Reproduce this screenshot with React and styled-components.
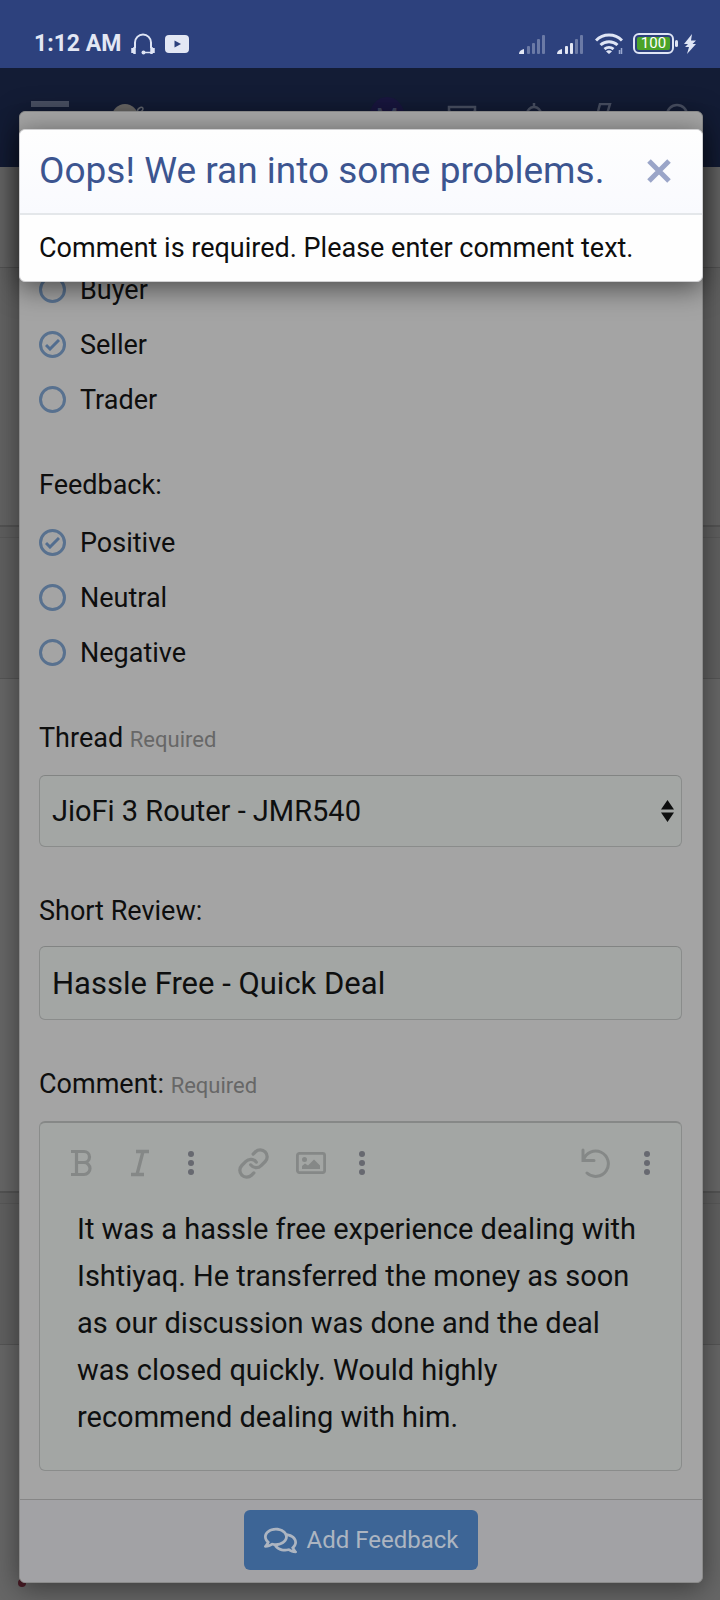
import React, { useState } from 'react';
import styled, { createGlobalStyle } from 'styled-components';
import { Link as LinkIcon } from 'lucide-react';
import { FaRegComments } from 'react-icons/fa';

const App = () => {
  const [role, setRole] = useState('Seller');
  const [rating, setRating] = useState('Positive');
  const [review, setReview] = useState('Hassle Free - Quick Deal');
  const [comment, setComment] = useState(
    'It was a hassle free experience dealing with Ishtiyaq. He transferred the money as soon as our discussion was done and the deal was closed quickly. Would highly recommend dealing with him.'
  );

  return (
    <Screen>
      <GlobalStyle />
      <Backdrop>
        <StatusBar />
        <NavBar />
        <PageBlock $height={100} />
        <PageBlock $height={258} $shade="#636363" $line />
        <Divider />
        <PageBlock $height={140} $shade="#606060" />
        <PageBlock $height={513} $line />
        <Divider />
        <PageBlock $height={140} $shade="#606060" />
        <PageBlock $height={256} $line $grow>
          <RedDot />
        </PageBlock>
      </Backdrop>

      <Panel>
        <PanelBody>
          <RadioGroup name="role" options={['Buyer', 'Seller', 'Trader']} value={role} onChange={setRole} />
          <RadioGroup
            name="rating"
            legend="Feedback:"
            options={['Positive', 'Neutral', 'Negative']}
            value={rating}
            onChange={setRating}
          />
          <Field>
            <Label htmlFor="thread">Thread <Hint>Required</Hint></Label>
            <SelectBox>
              <Select id="thread" defaultValue="jiofi">
                <option value="jiofi">JioFi 3 Router - JMR540</option>
              </Select>
              <svg width="13" height="22" viewBox="0 0 13 22" fill="#0e0f0f">
                <path d="M6.500 0L13 9.500H0zM6.500 22l6.500-9.500H0z" />
              </svg>
            </SelectBox>
          </Field>
          <Field>
            <Label htmlFor="review">Short Review:</Label>
            <Input id="review" value={review} onChange={e => setReview(e.target.value)} />
          </Field>
          <Field $last>
            <Label htmlFor="comment">Comment: <Hint>Required</Hint></Label>
            <Editor>
              <Toolbar />
              <Textarea id="comment" rows={5} value={comment} onChange={e => setComment(e.target.value)} />
            </Editor>
          </Field>
        </PanelBody>
        <PanelFooter>
          <SubmitButton type="button">
            <FaRegComments size={33} />
            Add Feedback
          </SubmitButton>
        </PanelFooter>
      </Panel>

      <Alert role="alertdialog" aria-labelledby="alert-title">
        <AlertHeader>
          <AlertTitle id="alert-title">Oops! We ran into some problems.</AlertTitle>
          <IconButton type="button" aria-label="Close">
            <svg width="24" height="24" viewBox="0 0 24 24" stroke="#9aa5c8" strokeWidth="5">
              <path d="M2 2l20 20M22 2L2 22" />
            </svg>
          </IconButton>
        </AlertHeader>
        <AlertText>Comment is required. Please enter comment text.</AlertText>
      </Alert>
    </Screen>
  );
};

const StatusBar = () => (
  <StatusRow>
    <Clock>1:12 AM</Clock>
    <svg width="24" height="22" viewBox="0 0 24 22" fill="none" stroke="#dfe5f5" strokeWidth="2">
      <path d="M4 15V9.500a8 8 0 0 1 16 0V15" />
      <path d="M12 19.500h8" strokeWidth="1.500" />
      <circle cx="12.500" cy="19.500" r="2" fill="#dfe5f5" stroke="none" />
      <path d="M1.500 15v5M3.500 14v7M22.500 15v5M20.500 14v7" strokeWidth="2.500" />
    </svg>
    <svg width="24" height="18" viewBox="0 0 24 18">
      <rect width="24" height="18" rx="4" fill="#e3e7f4" />
      <path d="M9.500 5.500v7l6.500-3.500z" fill="#2d417d" />
    </svg>
    <Spacer />
    <Signal bars={1} />
    <Signal bars={3} />
    <svg width="28" height="22" viewBox="0 0 28 22" fill="none" stroke="#dfe5f5" strokeWidth="3">
      <path d="M1 7.500a18 18 0 0 1 26 0" />
      <path d="M5.500 12a12.500 12.500 0 0 1 17 0" />
      <path d="M9.500 16.200a7 7 0 0 1 9 0" />
      <path d="M14 21l-3-2.500a4 4 0 0 1 6 0z" fill="#dfe5f5" stroke="none" />
      <path d="M26.500 15v6M24.500 17v4" strokeWidth="1.500" stroke="#9aa8cf" />
    </svg>
    <Battery>
      <BatteryLevel>100</BatteryLevel>
    </Battery>
    <svg width="12" height="20" viewBox="0 0 12 20" fill="#dfe5f5">
      <path d="M8 0L0 10h4L1 13h4L3 20l9-10H8.500L12 6.500H7z" />
    </svg>
  </StatusRow>
);

const Signal = ({ bars }) => (
  <svg width="28" height="20" viewBox="0 0 28 20">
    <path d="M0 20c0-3 2-4 5-5v5z" fill="#e3e7f4" />
    {[12, 9, 5, 1].map((y, i) => (
      <rect key={y} x={8 + i * 5} y={y} width="3" height={20 - y} rx="1" fill={i + 1 < bars ? '#e3e7f4' : '#6b7aa6'} />
    ))}
  </svg>
);

const NavBar = () => (
  <NavRow>
    <IconButton type="button" aria-label="Menu">
      <svg width="40" height="34" viewBox="0 0 40 34" fill="#4a5164">
        <path d="M1 0h38v6H1zM1 14h38v6H1zM1 28h38v6H1z" />
      </svg>
    </IconButton>
    <LogoLink href="#home" aria-label="Home">
      <svg width="34" height="30" viewBox="0 0 34 30">
        <circle cx="13" cy="14" r="13" fill="#6b6967" />
        <path d="M25 9c1-5 6-6 6-3s-3 2-5 4" fill="none" stroke="#62666f" strokeWidth="1.500" />
      </svg>
    </LogoLink>
    <Spacer />
    <Avatar>M</Avatar>
    <NavIcon label="Inbox"><path d="M2 4h26v22H2zM2 8l13 10L28 8" /></NavIcon>
    <NavIcon label="Alerts"><path d="M15 0v4M4 24c4-3 3-8 4-13a7 7 0 0 1 14 0c1 5 0 10 4 13zM12 27h6" /></NavIcon>
    <NavIcon label="Activity"><path d="M9 1h10l-3 10h7L10 29l3-13H5z" /></NavIcon>
    <NavIcon label="Search"><path d="M24 12a10 10 0 1 1-20 0 10 10 0 0 1 20 0zM21 19l8 9" /></NavIcon>
  </NavRow>
);

const NavIcon = ({ label, children }) => (
  <IconButton type="button" aria-label={label}>
    <svg width="30" height="30" viewBox="0 0 30 30" fill="none" stroke="#4a5164" strokeWidth="2.500">
      {children}
    </svg>
  </IconButton>
);

const RadioGroup = ({ name, legend, options, value, onChange }) => (
  <Fieldset>
    {legend && <Legend>{legend}</Legend>}
    {options.map(option => (
      <RadioLabel key={option}>
        <RadioMark>
          <Radio type="radio" name={name} checked={value === option} onChange={() => onChange(option)} />
          {value === option && (
            <svg width="15" height="12" viewBox="0 0 15 12" fill="none" stroke="#526d8f" strokeWidth="3">
              <path d="M1 6l4 4 9-9" />
            </svg>
          )}
        </RadioMark>
        {option}
      </RadioLabel>
    ))}
  </Fieldset>
);

const Toolbar = () => (
  <ToolRow>
    <ToolButton type="button" aria-label="Bold">
      <svg width="22" height="28" viewBox="0 0 22 28" fill="none" stroke="#858887" strokeWidth="3.200">
        <path d="M0 2.500h13a5.200 5.200 0 0 1 0 11H6M13 13.500a6 6 0 0 1 0 12H0M5.500 2.500v23" />
      </svg>
    </ToolButton>
    <ToolButton type="button" aria-label="Italic">
      <svg width="20" height="28" viewBox="0 0 20 28" fill="none" stroke="#858887" strokeWidth="3.300">
        <path d="M6 2.500h13M1 25.500h13M13 2.500L7 25.500" />
      </svg>
    </ToolButton>
    <MoreButton />
    <ToolGap />
    <ToolButton type="button" aria-label="Link">
      <LinkIcon size={33} strokeWidth={2.4} color="#858887" />
    </ToolButton>
    <ToolButton type="button" aria-label="Image">
      <svg width="30" height="22" viewBox="0 0 30 22">
        <rect x="1.400" y="1.400" width="27.200" height="19.200" rx="2" fill="none" stroke="#858887" strokeWidth="2.800" />
        <circle cx="8.500" cy="7.500" r="2.500" fill="#858887" />
        <path d="M6 17v-3l3-2.500 3 2L18 7.500l6 6V17z" fill="#858887" />
      </svg>
    </ToolButton>
    <MoreButton />
    <Spacer />
    <ToolButton type="button" aria-label="Undo">
      <svg width="30" height="30" viewBox="0 0 30 30" fill="none" stroke="#858887" strokeWidth="3" strokeLinecap="round">
        <path d="M2 2v10.500h11M2.500 12A12.700 12.700 0 1 1 6 25" />
      </svg>
    </ToolButton>
    <MoreButton />
  </ToolRow>
);

const MoreButton = () => (
  <ToolButton type="button" aria-label="More options" $narrow>
    <svg width="6" height="24" viewBox="0 0 6 24" fill="#676970">
      <circle cx="3" cy="3" r="3" />
      <circle cx="3" cy="12" r="3" />
      <circle cx="3" cy="21" r="3" />
    </svg>
  </ToolButton>
);

const GlobalStyle = createGlobalStyle`
  * {
    box-sizing: border-box;
  }
  body {
    margin: 0;
    background: #666;
    color: #0e0e0e;
    font-family: Roboto, sans-serif;
    font-size: 27px;
    line-height: 34px;
  }
  svg {
    display: block;
    flex: none;
  }
`;

/* the page, the form and the alert share one grid cell, stacked in that order */
const Screen = styled.div`
  display: grid;
  grid-template-columns: minmax(0, 1fr);
  min-height: 100vh;
  overflow: hidden;
  > * {
    grid-area: 1 / 1;
  }
`;

const Backdrop = styled.div`
  display: flex;
  flex-direction: column;
`;

const StatusRow = styled.header`
  display: flex;
  align-items: center;
  gap: 10px;
  height: 68px;
  padding: 19px 24px 0 34px;
  background: #2d417d;
`;

const Clock = styled.time`
  color: #e3e7f4;
  font-size: 23px;
  font-weight: 700;
`;

const Spacer = styled.span`
  flex: 1;
`;

const Battery = styled.span`
  position: relative;
  padding: 2px;
  border: 2px solid #dfe5f5;
  border-radius: 6px;
  &::after {
    content: '';
    position: absolute;
    top: 5px;
    right: -6px;
    width: 3px;
    height: 7px;
    border-radius: 2px;
    background: #dfe5f5;
  }
`;

const BatteryLevel = styled.span`
  display: block;
  width: 33px;
  border-radius: 2px;
  background: #4aa329;
  color: #fff;
  font-size: 15px;
  line-height: 13px;
  text-align: center;
`;

const NavRow = styled.nav`
  display: flex;
  align-items: center;
  gap: 42px;
  height: 99px;
  padding: 0 27px 0 30px;
  background: #131c35;
`;

const IconButton = styled.button`
  display: flex;
  align-items: center;
  padding: 0;
  border: 0;
  background: none;
  cursor: pointer;
`;

const LogoLink = styled.a`
  display: block;
`;

const Avatar = styled.span`
  width: 36px;
  border-radius: 50%;
  background: #19163f;
  color: #3f4560;
  font-size: 26px;
  line-height: 42px;
  text-align: center;
`;

const PageBlock = styled.div`
  position: relative;
  flex: ${props => (props.$grow ? '1 0 auto' : 'none')};
  min-height: ${props => props.$height}px;
  border-top: ${props => (props.$line ? '1px solid #555' : '0')};
  background: ${props => props.$shade || '#676767'};
`;

const Divider = styled.div`
  height: 13px;
  border-top: 2px solid #535353;
  border-bottom: 1px solid #585858;
  background: #5f5f5f;
`;

const RedDot = styled.span`
  position: absolute;
  bottom: 14px;
  left: 18px;
  width: 8px;
  height: 8px;
  border-radius: 50%;
  background: #4a1c26;
`;

const Panel = styled.form`
  z-index: 1;
  align-self: start;
  margin: 111px 17px 18px 19px;
  border: 1px solid #8b8b8b;
  border-radius: 6px;
  background: #a4a4a4;
  box-shadow: 0 5px 28px rgba(0, 0, 0, 0.45);
`;

const PanelBody = styled.div`
  padding: 150px 20px 28px 19px;
`;

const Fieldset = styled.fieldset`
  min-width: 0;
  margin: 0 0 41px;
  padding: 0;
  border: 0;
`;

const Legend = styled.legend`
  margin-bottom: 13px;
  padding: 0;
`;

const RadioLabel = styled.label`
  display: flex;
  align-items: center;
  gap: 14px;
  height: 55px;
`;

const RadioMark = styled.span`
  display: grid;
  place-items: center;
  > * {
    grid-area: 1 / 1;
  }
`;

const Radio = styled.input`
  appearance: none;
  width: 27px;
  height: 27px;
  margin: 0;
  border: 3px solid #58718f;
  border-radius: 50%;
`;

const Field = styled.div`
  margin-bottom: ${props => (props.$last ? 0 : 47)}px;
`;

const Label = styled.label`
  display: block;
  margin-bottom: 18px;
`;

const Hint = styled.span`
  color: #676767;
  font-size: 22px;
`;

const SelectBox = styled.div`
  display: grid;
  align-items: center;
  > * {
    grid-area: 1 / 1;
  }
  > svg {
    justify-self: end;
    margin-right: 8px;
    pointer-events: none;
  }
`;

const Input = styled.input`
  display: block;
  width: 100%;
  height: 74px;
  padding: 0 12px;
  border: 1px solid #8a8c8b;
  border-top-color: #828483;
  border-radius: 6px;
  background: #a3a6a4;
  color: #0e0f0f;
  font: inherit;
  font-size: 31px;
`;

const Select = styled(Input).attrs({ as: 'select' })`
  appearance: none;
  height: 72px;
  font-size: 29px;
`;

const Editor = styled.div`
  border: 1px solid #8a8c8b;
  border-top: 2px solid #868887;
  border-radius: 6px;
  background: #a3a6a4;
`;

const ToolRow = styled.div`
  display: flex;
  align-items: center;
  height: 80px;
  padding: 0 13px;
`;

const ToolButton = styled.button`
  display: grid;
  place-items: center;
  width: ${props => (props.$narrow ? 43 : 58)}px;
  height: 50px;
  padding: 0;
  border: 0;
  background: none;
`;

const ToolGap = styled.span`
  width: 12px;
`;

const Textarea = styled.textarea`
  display: block;
  width: 100%;
  padding: 3px 34px 29px 37px;
  border: 0;
  outline: 0;
  background: none;
  color: #0e0f0f;
  font: inherit;
  font-size: 29px;
  line-height: 47px;
  resize: none;
  overflow: hidden;
`;

const PanelFooter = styled.div`
  display: flex;
  justify-content: center;
  padding: 10px 0 12px;
  border-top: 1px solid #868686;
  border-radius: 0 0 6px 6px;
  background: #a2a2a5;
`;

const SubmitButton = styled.button`
  display: flex;
  align-items: center;
  gap: 10px;
  height: 60px;
  padding: 0 20px;
  border: 0;
  border-radius: 6px;
  background: #3d6596;
  color: #adb5c1;
  font: inherit;
  font-size: 24px;
`;

const Alert = styled.section`
  z-index: 2;
  align-self: start;
  margin: 129px 17px 0 19px;
  border: 1px solid #d0d0d2;
  border-radius: 6px;
  background: #fefefe;
  box-shadow: 0 6px 28px rgba(0, 0, 0, 0.55);
`;

const AlertHeader = styled.div`
  display: flex;
  align-items: center;
  justify-content: space-between;
  padding: 18px 31px 19px 19px;
  border-bottom: 2px solid #e4e7ea;
  border-radius: 6px 6px 0 0;
  background: linear-gradient(#fefefe, #f9fafe);
`;

const AlertTitle = styled.h2`
  margin: 0;
  color: #3c5590;
  font-size: 37px;
  font-weight: 400;
  line-height: 46px;
`;

const AlertText = styled.p`
  margin: 0;
  padding: 16px 19px;
`;

export default App;
